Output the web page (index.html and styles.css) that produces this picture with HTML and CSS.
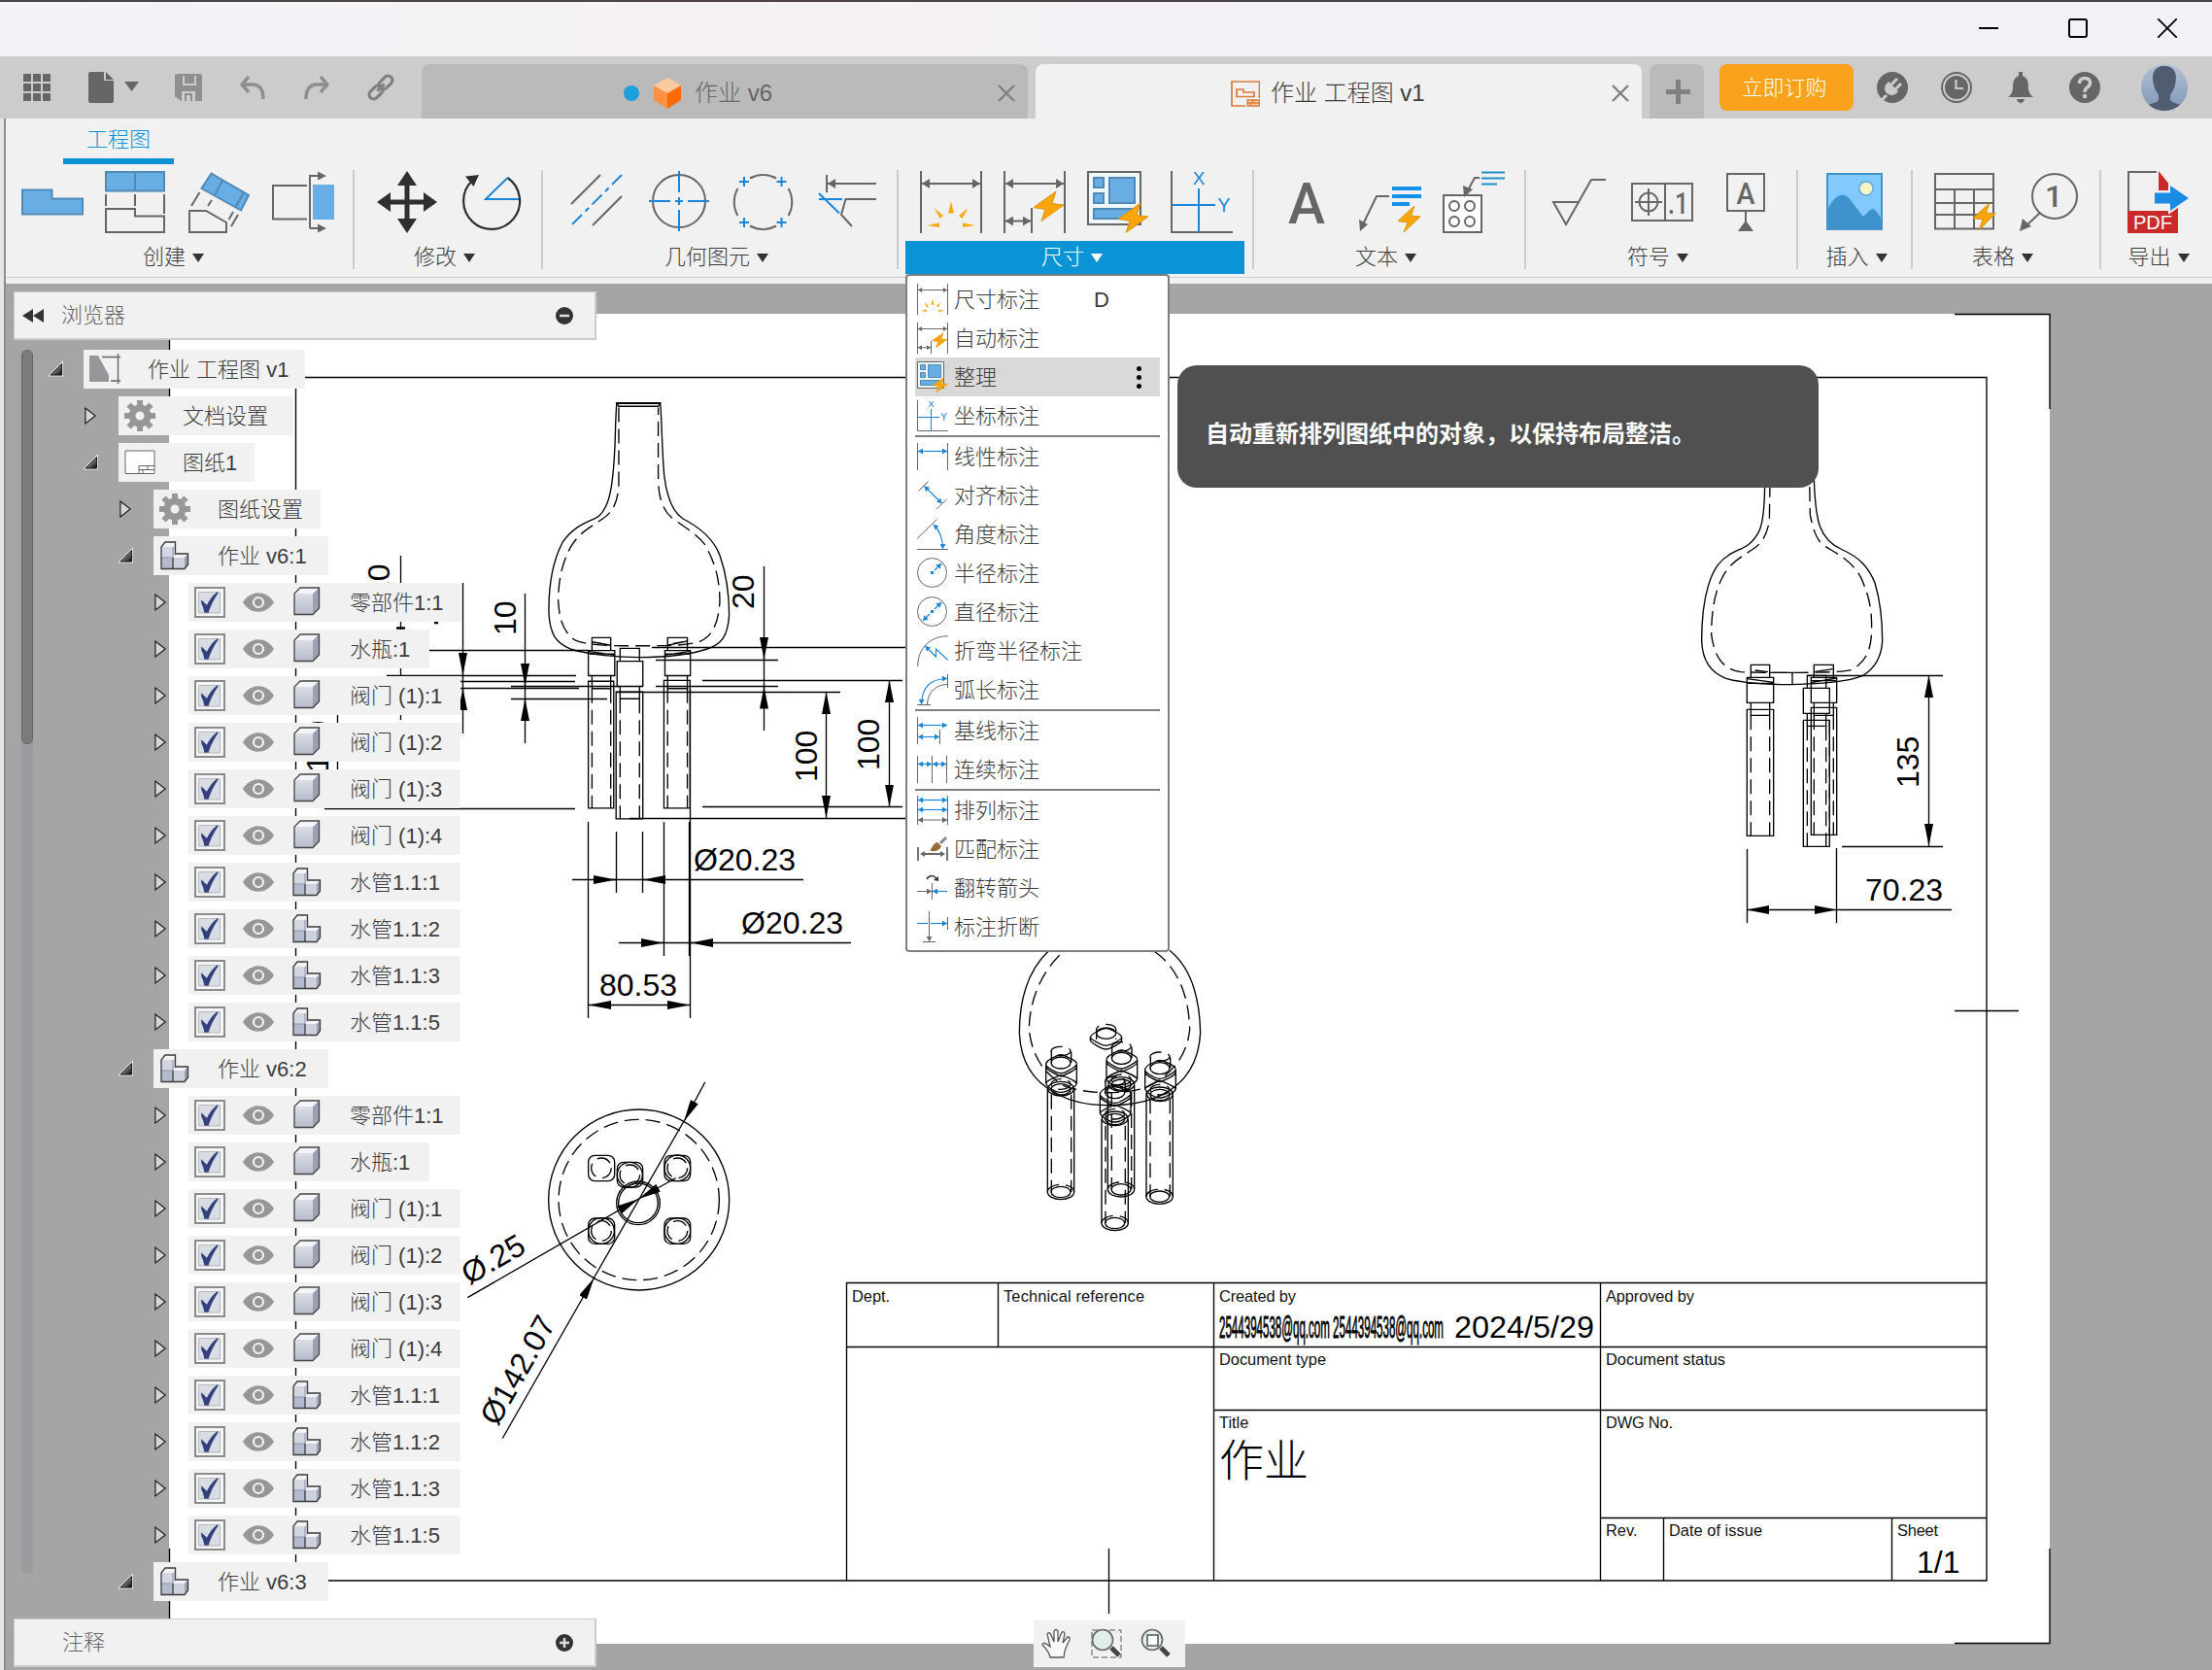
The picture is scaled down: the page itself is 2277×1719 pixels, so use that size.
FILE: index.html
```html
<!DOCTYPE html>
<html lang="zh-CN">
<head>
<meta charset="utf-8">
<title>作业 工程图 v1</title>
<link rel="stylesheet" href="styles.css">
</head>
<body>
<svg class="defs" width="0" height="0">
  <defs>
    <marker id="ag" markerUnits="userSpaceOnUse" markerWidth="8" markerHeight="10" refX="8" refY="5" orient="auto-start-reverse"><path d="M0 0L8 5L0 10z" fill="#666"/></marker>
    <marker id="ab" markerUnits="userSpaceOnUse" markerWidth="5" markerHeight="6" refX="5" refY="3" orient="auto-start-reverse"><path d="M0 0L5 3L0 6z" fill="#1a86d9"/></marker>
    <marker id="as" markerUnits="userSpaceOnUse" markerWidth="5" markerHeight="6" refX="5" refY="3" orient="auto-start-reverse"><path d="M0 0L5 3L0 6z" fill="#666"/></marker>
    <marker id="dim" markerUnits="userSpaceOnUse" markerWidth="23" markerHeight="9" refX="23" refY="4.5" orient="auto-start-reverse"><path d="M0 0L23 4.5L0 9z"/></marker>
    <linearGradient id="cubeg" x1="0" y1="0" x2="0" y2="1"><stop offset="0" stop-color="#e6e8ef"/><stop offset="1" stop-color="#b7bccb"/></linearGradient>
    <linearGradient id="expg" x1="0" y1="0" x2="1" y2="1"><stop offset="0" stop-color="#eee"/><stop offset="1" stop-color="#000"/></linearGradient>
    <linearGradient id="avg" x1="0" y1="0" x2="0" y2="1"><stop offset="0" stop-color="#b3c1d6"/><stop offset="1" stop-color="#7f96b5"/></linearGradient>
    <clipPath id="avc"><circle cx="24" cy="24" r="24"/></clipPath>
  </defs>
</svg>
<svg class="icons-lib">
  <symbol id="i-base" viewBox="0 0 64 64"><path class="blk" d="M1 19.5H31.5V28.5H63V44.5H1z"/></symbol>
  <symbol id="i-proj" viewBox="0 0 64 64"><path class="blk" d="M1 1H61V20.5H1zM31 1V20.5"/><path class="g" d="M1 24V36M31 24V36M61 24V44M1 39H31V46.5H61V63H1z"/></symbol>
  <symbol id="i-aux" viewBox="0 0 64 64"><path class="blk" d="M23.500 2.500L62 25L54 40.500L13.500 18zM35 10L27 25M57 22L48.500 37"/><path class="g" d="M11.500 22L3 36M24 30L20 36M46 42L41.500 50M51 45L44 57M1 41H18L39 53V63H1z"/></symbol>
  <symbol id="i-section" viewBox="0 0 64 64"><path class="g" d="M36 15H1V49.500H36M39 59V5H48M39 59H48"/><path d="M47 .5L56 5L47 9.500zM47 54.500L56 59L47 63.500z" fill="#666"/><path d="M42 14H64V50H42z" fill="#68ade3"/></symbol>
  <symbol id="i-move" viewBox="0 0 64 64"><path d="M32 0L42 15H34.500V29.500H49V22L63 32L49 42V34.500H34.500V49H42L32 64L22 49H29.500V34.500H15V42L1 32L15 22V29.500H29.500V15H22z" fill="#2f2f2f"/></symbol>
  <symbol id="i-rotate" viewBox="0 0 64 64"><path d="M49.500 7A29 29 0 1 1 13 10" fill="none" stroke="#2f2f2f" stroke-width="2.200"/><path d="M20 4L6 5.500L14.500 16z" fill="#2f2f2f"/><path class="b" d="M61 29H27L49.500 7"/></symbol>
  <symbol id="i-cline" viewBox="0 0 64 64"><path class="g" d="M37 4L7 34M59 26L29 56"/><path class="b" d="M59 4L5 58" stroke-dasharray="14 5 5 5"/></symbol>
  <symbol id="i-cmark" viewBox="0 0 64 64"><circle class="g" cx="32" cy="31" r="27"/><path class="b" d="M32 0V22M32 40V62M32 27V35M28 31H36M1 31H23M41 31H63"/></symbol>
  <symbol id="i-cpat" viewBox="0 0 64 64"><path class="g" d="M19 7.500A28 28 0 0 1 46 7.500M19 56.500A28 28 0 0 0 46 56.500M6.500 18A28 28 0 0 0 6.500 46M58.500 18A28 28 0 0 1 58.500 46"/><path class="b" d="M8 11H18M13 6V16M46.500 11H56.500M51.500 6V16M8 53H18M13 48V58M46.500 53H56.500M51.500 48V58"/></symbol>
  <symbol id="i-edge" viewBox="0 0 64 64"><path class="g" d="M12 4V22M63 29H31.500L27 45L38 57"/><path class="g" d="M63 13H13" marker-end="url(#ag)"/><path class="b" d="M4 23L25 43.500M4 29H28"/></symbol>
  <symbol id="i-dim" viewBox="0 0 64 64"><path class="g" d="M1 0V64M63 0V64"/><path class="g" d="M2 13H62" marker-start="url(#ag)" marker-end="url(#ag)"/><path d="M32 31L35 43.500H29zM14.500 38L24 46L20.500 49zM49.500 38L40 46L43.500 49zM7 56L20 53.500V58zM57 56L44 53.500V58z" fill="#f9a912"/></symbol>
  <symbol id="i-auto" viewBox="0 0 64 64"><path class="g" d="M1 0V64M63 0V64M29 38V64"/><path class="g" d="M2 13H62" marker-start="url(#ag)" marker-end="url(#ag)"/><path class="g" d="M2 51.500H28" marker-start="url(#ag)" marker-end="url(#ag)"/><path class="bolt" d="M54 21L31 37.500L43 39.500L39 51.500L62 35L50 33.500z"/></symbol>
  <symbol id="i-arr" viewBox="0 0 64 64"><path d="M1 1H55V55H1z" fill="#eef6fc" stroke="#666" stroke-width="2"/><path class="blk" d="M7 7H17V17H7zM23 7H49V33H23zM7 23H17V33H7zM7 39H49V49H7z"/><path class="bolt" d="M55 33L32 49.500L44 51.500L40 63.500L63 47L51 45.500z"/></symbol>
  <symbol id="i-ord" viewBox="0 0 64 64"><path class="g" d="M1 0V63H64"/><path class="b" d="M29 18V62M2 35H46"/><text class="it" x="29" y="14" text-anchor="middle" fill="#1a86d9" font-size="19">X</text><text class="it" x="55" y="41.500" text-anchor="middle" fill="#1a86d9" font-size="20">Y</text></symbol>
  <symbol id="i-text" viewBox="0 0 64 64"><text class="rb" x="13" y="54" fill="#666" font-size="59" textLength="38" lengthAdjust="spacingAndGlyphs">A</text></symbol>
  <symbol id="i-leader" viewBox="0 0 64 64"><path class="g" d="M31 26H18L4 55"/><path d="M0 50L9 55L1 62z" fill="#666"/><path d="M34 18H64M34 26H64M34 34H52" stroke="#1390e8" stroke-width="4"/><path class="bolt" d="M57 36L40 51.500L50 53L46 63L63 47L53.500 46z"/></symbol>
  <symbol id="i-hole" viewBox="0 0 64 64"><path d="M1 25H40V63H1z" fill="#fff" stroke="#666" stroke-width="2"/><g class="g"><circle cx="12" cy="36" r="5"/><circle cx="28" cy="36" r="5"/><circle cx="12" cy="52" r="5"/><circle cx="28" cy="52" r="5"/><path d="M38 7H33L26 20"/></g><path d="M21 15L31 19L22 27z" fill="#666"/><path d="M40 1.500H64M40 7.500H64M40 13.500H56" stroke="#1d8fc9" stroke-width="2"/></symbol>
  <symbol id="i-surf" viewBox="0 0 64 64"><path class="g" d="M32 32H6L19 55L45 9H60"/></symbol>
  <symbol id="i-gtol" viewBox="0 0 64 64"><path class="g" d="M1 13H63V51H1zM35 13V51M4 32H32M18 18V46"/><circle class="g" cx="18" cy="32" r="9.500"/><text class="rb" x="38" y="43.500" fill="#666" font-size="31" textLength="21" lengthAdjust="spacingAndGlyphs">.1</text></symbol>
  <symbol id="i-datum" viewBox="0 0 64 64"><path class="g" d="M13 3H51V41H13zM32 41V54"/><path d="M24 62L32 51L40 62z" fill="#666"/><text class="rb" x="32" y="34" text-anchor="middle" fill="#666" font-size="31" textLength="19" lengthAdjust="spacingAndGlyphs">A</text></symbol>
  <symbol id="i-image" viewBox="0 0 64 64"><path d="M4 3H60V60H4z" fill="#82c9fd"/><path d="M4 41C11 23 22 21 28 30L41 47L46 42Q51 36 55 42L60 50V60H4z" fill="#3f93cc"/><circle cx="44" cy="18" r="7" fill="#fdf6c8" stroke="#66afdb" stroke-width="1.500"/><path d="M4 3H60V60H4z" fill="none" stroke="#4592c6" stroke-width="2"/></symbol>
  <symbol id="i-table" viewBox="0 0 64 64"><path class="g" d="M1 3H61V59.500H1zM1 19H61M1 33H61M1 45H61M21 19V59M41 19V59"/><path class="bolt" d="M57 33L40 48.500L50 50L46 61L63 44L53.500 43z"/></symbol>
  <symbol id="i-balloon" viewBox="0 0 64 64"><circle class="g" cx="38" cy="26" r="23"/><path class="g" d="M23 43L7 58"/><path d="M5 49L14 57L2 62z" fill="#666"/><text class="rb" x="37" y="37" text-anchor="middle" fill="#666" font-size="32">1</text></symbol>
  <symbol id="i-export" viewBox="0 0 64 64"><path class="g" d="M1 41V1H30"/><path d="M32 0L48 20H32z" fill="#cb2a2a"/><path d="M0 41H44L52 37V64H0z" fill="#cb2a2a"/><path d="M28 22.500H44V15L63 28L44 41V33.500H28z" fill="#1b8ce3" stroke="#f1f1f1" stroke-width="4" paint-order="stroke"/><text class="it" x="6" y="60" fill="#fff" font-size="21" textLength="40" lengthAdjust="spacingAndGlyphs">PDF</text></symbol>

  <symbol id="m-lin" viewBox="0 0 32 32"><path class="s" d="M.5 2V30M31.500 2V30"/><path class="t" d="M1 10.500H31" marker-start="url(#ab)" marker-end="url(#ab)"/></symbol>
  <symbol id="m-ali" viewBox="0 0 32 32"><path class="s" d="M1.500 11.500L11.500 1.500M20 30L30.500 20"/><path class="t" d="M7.500 6.500L25.500 24" marker-start="url(#ab)" marker-end="url(#ab)"/></symbol>
  <symbol id="m-ang" viewBox="0 0 32 32"><path class="s" d="M0 20.500L20.500 .5M0 31.500H32"/><path class="t" d="M17 6Q26.500 15 26.500 31" marker-start="url(#ab)" marker-end="url(#ab)"/></symbol>
  <symbol id="m-rad" viewBox="0 0 32 32"><circle class="s" cx="15.500" cy="15.500" r="15"/><path d="M14 14H17V17H14z" fill="#1a86d9"/><path class="t" d="M18 13L25 6" marker-end="url(#ab)"/></symbol>
  <symbol id="m-dia" viewBox="0 0 32 32"><circle class="s" cx="15.500" cy="15.500" r="15"/><path d="M14 14H17V17H14z" fill="#1a86d9"/><path class="t" d="M18 13L25 6" marker-end="url(#ab)"/><path class="t" d="M13 18L6 25" marker-end="url(#ab)"/></symbol>
  <symbol id="m-jog" viewBox="0 0 32 32"><path class="s" d="M.7 32C1 12 14 1 32 .7"/><path class="t" d="M32 25.500L19.500 14V22L8.500 11" marker-end="url(#ab)"/></symbol>
  <symbol id="m-arc" viewBox="0 0 32 32"><path class="s" d="M0 31.500H14M31.500 0V14M10.500 31C11 18 20 10.500 31 10.500"/><path class="t" d="M4.500 31C5 14 14 4.500 31 4.500" marker-start="url(#ab)" marker-end="url(#ab)"/></symbol>
  <symbol id="m-bas" viewBox="0 0 32 32"><path class="s" d="M.5 2V30M23.500 15V30"/><path class="t" d="M1 10.500H31" marker-start="url(#ab)" marker-end="url(#ab)"/><path class="t" d="M1 22.500H23" marker-start="url(#ab)" marker-end="url(#ab)"/></symbol>
  <symbol id="m-con" viewBox="0 0 32 32"><path class="s" d="M.5 2V30M15.500 2V30M30.500 2V30"/><path class="t" d="M1 10.500H15" marker-start="url(#ab)" marker-end="url(#ab)"/><path class="t" d="M16 10.500H30" marker-start="url(#ab)" marker-end="url(#ab)"/></symbol>
  <symbol id="m-row" viewBox="0 0 32 32"><path class="t" d="M.5 1V31M31.500 1V31"/><path class="t" d="M1 5.500H31" marker-start="url(#ab)" marker-end="url(#ab)"/><path class="t" d="M1 15.500H31" marker-start="url(#ab)" marker-end="url(#ab)"/><path class="s" d="M1 26H31" marker-start="url(#as)" marker-end="url(#as)"/></symbol>
  <symbol id="m-mat" viewBox="0 0 32 32"><path d="M1 14V28M31 14V28M6 21H26" stroke="#666" stroke-width="1.800"/><path d="M3 21L8 18V24zM29 21L24 18V24z" fill="#666"/><path d="M13 17.500C16 15 16 10 21 9L25 13C23 18 18 19 13 17.500z" fill="#9a6a35"/><path d="M24 10L30 4" stroke="#888" stroke-width="3"/></symbol>
  <symbol id="m-fli" viewBox="0 0 32 32"><path class="s" d="M15.500 11V28"/><path class="s" d="M0 19.500H15" marker-end="url(#as)"/><path class="t" d="M31 19.500H16" marker-end="url(#ab)"/><path d="M10 7C13 2 18 3 20 7" fill="none" stroke="#333" stroke-width="1.500"/><path d="M17 8L22 9L22 4z" fill="#333"/></symbol>
  <symbol id="m-brk" viewBox="0 0 32 32"><path class="s" d="M31.500 6V19M6 31.500H19"/><path class="s" d="M12.500 0V31" marker-end="url(#as)"/><path class="t" d="M0 12.500H11"/><path class="t" d="M14 12.500H31" marker-end="url(#ab)"/></symbol>

  <symbol id="t-doc" viewBox="0 0 32 32"><path d="M0 2H9L20 22V29H0z" fill="#96979b"/><path d="M13 3.500H32M22 28H32M29.500 0V31" stroke="#666" stroke-width="1.400"/></symbol>
  <symbol id="t-gear" viewBox="0 0 32 32"><circle cx="16" cy="16" r="8" fill="none" stroke="#979797" stroke-width="7"/><path d="M16 0V6M16 26V32M0 16H6M26 16H32M4.500 4.500L9 9M23 23L27.500 27.500M4.500 27.500L9 23M23 9L27.500 4.500" stroke="#979797" stroke-width="6"/></symbol>
  <symbol id="t-sheet" viewBox="0 0 32 32"><path d="M1 4H31V27.500H1zM15 19.500H31M15 19.500V27.500M15 23.500H31M24 19.500V23.500M19 23.500V27.500" fill="#fff" stroke="#666"/></symbol>
  <symbol id="t-asm" viewBox="0 0 32 32"><path d="M2 7L6 2H17V28.500H2z" fill="#d3d7e2"/><path d="M2 7L6 2H17L14 7z" fill="#f2f3f7"/><path d="M2 18H14V29H2z" fill="#b5bbce"/><path d="M14 18L18 14H29.500V25L26 29.500H14z" fill="#cdd1dd"/><path d="M14 18L18 14H29.500L26 18z" fill="#f2f3f7"/><path d="M26 18L29.500 14V25L26 29.500z" fill="#9ba1b3"/><path d="M2 18H14M14 7V18" stroke="#8d93a8"/><path d="M2 29.500V7L6 2H16.500V14H29.500V25L26 29.500zM14 18V29.500" fill="none" stroke="#3a3a3a" stroke-width="1.300"/></symbol>
  <symbol id="t-cube" viewBox="0 0 32 32"><path d="M3 7L9 1H28L28 22L22 28H3z" fill="url(#cubeg)"/><path d="M22 7L28 1V22L22 28z" fill="#9ba1b3"/><path d="M3 7L9 1H28L22 7z" fill="#f4f5f8"/><path d="M3 28V7L9 1H28.500V22L22 28.500H3z" fill="none" stroke="#444" stroke-width="1.300"/></symbol>
  <symbol id="t-eye" viewBox="0 0 32 32"><path d="M0 16C8 3 24 3 32 16C24 29 8 29 0 16z" fill="#979797"/><circle cx="16" cy="16" r="5" fill="none" stroke="#f1f1f1" stroke-width="2.200"/></symbol>
  <symbol id="t-check" viewBox="0 0 32 32"><path d="M1 1H31V31H1z" fill="#f5f5f5" stroke="#8b8b8b" stroke-width="2"/><path d="M4.500 5.500H26.500V27H4.500z" fill="#d9dce2" stroke="#b5b8be"/><path d="M8 15L12 19L13 20Q18 10 24 6Q17 16 14 26L11 26Q10 20 8 17z" fill="#33417e" stroke="#33417e" stroke-width="1.500"/></symbol>
  <symbol id="t-open" viewBox="0 0 16 16"><path d="M15 1V15H1z" fill="url(#expg)" stroke="#e8e8e8" stroke-width="2"/><path d="M14.500 2V14.500H2z" fill="url(#expg)" stroke="#111"/></symbol>
  <symbol id="t-shut" viewBox="0 0 16 20"><path d="M2 1.500V18.500L13 10z" fill="#d6d6d6" stroke="#222" stroke-width="1.300"/></symbol>
</svg>

<header class="titlebar">
  <svg width="20" height="20"><path d="M0 10H20" stroke="#000" stroke-width="2"/></svg>
  <svg width="20" height="20"><rect x="1" y="1" width="18" height="18" rx="2" fill="none" stroke="#000" stroke-width="2"/></svg>
  <svg width="20" height="20"><path d="M0 0L20 20M20 0L0 20" stroke="#000" stroke-width="1.800"/></svg>
</header>

<nav class="tabbar">
  <div class="quick">
    <svg width="28" height="28"><path d="M0 0H8V8H0zM10 0H18V8H10zM20 0H28V8H20zM0 10H8V18H0zM10 10H18V18H10zM20 10H28V18H20zM0 20H8V28H0zM10 20H18V28H10zM20 20H28V28H20z" fill="#666"/></svg>
    <svg class="q-file" width="52" height="32"><path d="M2 0H16V9H26V30Q26 32 24 32H2Q0 32 0 30V2Q0 0 2 0zM18 0L26 8H18z" fill="#666"/><path d="M37 10H52L44.500 20z" fill="#666"/></svg>
    <svg class="q-save" width="28" height="28"><path d="M2 0H26Q28 0 28 2V28H6L0 23V2Q0 0 2 0zM8 2V12H22V2H20V10H10V2zM7 28H21V18H7zM10 28V20H18V28H16V22H12V28z" fill="#8f8f8f" fill-rule="evenodd"/></svg>
    <svg class="q-undo" width="27" height="24"><path d="M9 1L2 9L9 17M2 9H14Q24 10 24 24" fill="none" stroke="#8f8f8f" stroke-width="3.500"/></svg>
    <svg class="q-redo" width="27" height="24"><path d="M18 1L25 9L18 17M25 9H13Q3 10 3 24" fill="none" stroke="#8f8f8f" stroke-width="3.500"/></svg>
    <svg class="q-link" width="26" height="26"><g fill="none" stroke="#808080" stroke-width="3.200" transform="rotate(-45 13 13)"><rect x="-2" y="8.500" width="16" height="9" rx="4.500"/><rect x="12" y="8.500" width="16" height="9" rx="4.500"/><path d="M8 13H18"/></g></svg>
  </div>
  <div class="tab">
    <span class="dot"></span>
    <svg width="28" height="32"><path d="M14 0L28 8L14 16L0 8z" fill="#ffc9a0"/><path d="M0 8L14 16V32L0 23z" fill="#ff9242"/><path d="M28 8L14 16V32L28 23z" fill="#fd6a02"/></svg>
    <span>作业 v6</span>
    <svg class="x" width="18" height="18"><path d="M1 1L17 17M17 1L1 17" stroke="#808080" stroke-width="2.400"/></svg>
  </div>
  <div class="tab on">
    <svg width="30" height="27"><path d="M15 26H1V1H29.500V18M6 16.500V9H13V12H24V16.500z" fill="none" stroke="#d87a3c" stroke-width="1.700"/><path d="M17 20H29.500V26H17zM17 23H29.500M23 20V23M20 23V26" fill="#fbd0ae" stroke="#d87a3c" stroke-width="1.300"/></svg>
    <span>作业 工程图 v1</span>
    <svg class="x" width="18" height="18"><path d="M1 1L17 17M17 1L1 17" stroke="#808080" stroke-width="2.400"/></svg>
  </div>
  <div class="plus"><svg width="25" height="25"><path d="M12.500 0V25M0 12.500H25" stroke="#808080" stroke-width="5"/></svg></div>
  <button class="buy">立即订购</button>
  <div class="acct">
    <svg width="32" height="32"><circle cx="16" cy="16" r="16" fill="#666"/><path d="M21 7L15 13M25 12L19 18M5 29L10 24" stroke="#ccc" stroke-width="3"/><path d="M12 10L22 20Q17 27 10 22Q5 16 12 10z" fill="#ccc"/></svg>
    <svg width="32" height="32"><circle cx="16" cy="16" r="15" fill="none" stroke="#666" stroke-width="2"/><circle cx="16" cy="16" r="12" fill="#666"/><path d="M15.500 8V17H23" fill="none" stroke="#ccc" stroke-width="2.200"/></svg>
    <svg width="32" height="32"><path d="M14 0H18V4C24 6 24 12 24 18Q25 23 29 26H3Q7 23 8 18C8 12 8 6 14 4zM12 28H20Q19 32 16 32Q13 32 12 28z" fill="#666"/></svg>
    <svg width="32" height="32"><circle cx="16" cy="16" r="16" fill="#666"/><path d="M10.500 12Q10.500 6.500 16 6.500Q21.500 6.500 21.500 11.500Q21.500 14 18.500 16Q16 18 16 21" fill="none" stroke="#ccc" stroke-width="3.500"/><path d="M14.200 23H18V27H14.200z" fill="#ccc"/></svg>
    <svg class="avatar" width="48" height="48"><g clip-path="url(#avc)"><path d="M0 0H48V48H0z" fill="url(#avg)"/><path d="M24 2C35 2 37 10 35.500 19C34.500 26 31 30 30 32V37Q32 40 42 42V48H6V42Q16 40 18 37V32C17 30 13.500 26 12.500 19C11 10 13 2 24 2z" fill="#505c6f"/></g></svg>
  </div>
</nav>

<main class="work">
  <section class="ribbon">
    <div class="rtabs"><span>工程图</span></div>
    <div class="groups">
      <div class="grp first"><div class="icons"><svg><use href="#i-base"/></svg><svg><use href="#i-proj"/></svg><svg><use href="#i-aux"/></svg><svg><use href="#i-section"/></svg></div><div class="lbl">创建<i></i></div></div>
      <div class="grp"><div class="icons"><svg><use href="#i-move"/></svg><svg><use href="#i-rotate"/></svg></div><div class="lbl">修改<i></i></div></div>
      <div class="grp"><div class="icons"><svg><use href="#i-cline"/></svg><svg><use href="#i-cmark"/></svg><svg><use href="#i-cpat"/></svg><svg><use href="#i-edge"/></svg></div><div class="lbl">几何图元<i></i></div></div>
      <div class="grp open"><div class="icons"><svg><use href="#i-dim"/></svg><svg><use href="#i-auto"/></svg><svg><use href="#i-arr"/></svg><svg><use href="#i-ord"/></svg></div><div class="lbl">尺寸<i></i></div></div>
      <div class="grp"><div class="icons"><svg><use href="#i-text"/></svg><svg><use href="#i-leader"/></svg><svg><use href="#i-hole"/></svg></div><div class="lbl">文本<i></i></div></div>
      <div class="grp"><div class="icons"><svg><use href="#i-surf"/></svg><svg><use href="#i-gtol"/></svg><svg><use href="#i-datum"/></svg></div><div class="lbl">符号<i></i></div></div>
      <div class="grp one"><div class="icons"><svg><use href="#i-image"/></svg></div><div class="lbl">插入<i></i></div></div>
      <div class="grp"><div class="icons"><svg><use href="#i-table"/></svg><svg><use href="#i-balloon"/></svg></div><div class="lbl">表格<i></i></div></div>
      <div class="grp last"><div class="icons"><svg><use href="#i-export"/></svg></div><div class="lbl">导出<i></i></div></div>
    </div>
  </section>

  <section class="canvas">
    <svg class="sheet" width="2271" height="1427" viewBox="6 292 2271 1427">
      <path d="M174 323H2110V1692H174z" fill="#fff"/>
      <g class="ln">
        <path d="M174.500 408V323.500H272M2012 323.500H2110V421M174.500 1594V1691.500H272M2012 1691.500H2110V1594"/>
        <path d="M304.500 388.500H2045V1627H304.500zM1141.500 1594V1661M2012 1040.500H2078"/>
        <path d="M871.500 1627V1320.500H2045M1027.500 1320V1386.500M871 1386.500H2045M1249.500 1320V1627M1647.500 1320V1627M1249.500 1451.500H2045M1647.500 1562.500H2045M1712.500 1562.500V1627M1947.500 1562.500V1627"/>
      </g>
      <g class="cap">
        <text x="877" y="1340">Dept.</text>
        <text x="1033" y="1340" textLength="145">Technical reference</text>
        <text x="1255" y="1340" textLength="79">Created by</text>
        <text x="1653" y="1340" textLength="91">Approved by</text>
        <text x="1255" y="1405" textLength="110">Document type</text>
        <text x="1653" y="1405" textLength="123">Document status</text>
        <text x="1255" y="1470">Title</text>
        <text x="1653" y="1470" textLength="69">DWG No.</text>
        <text x="1653" y="1581">Rev.</text>
        <text x="1718" y="1581" textLength="96">Date of issue</text>
        <text x="1953" y="1581" textLength="42">Sheet</text>
      </g>
      <g class="dt">
        <text class="mail" x="1255" y="1377" textLength="231" lengthAdjust="spacingAndGlyphs">2544394538@qq.com 2544394538@qq.com</text>
        <text x="1497" y="1377" textLength="144" lengthAdjust="spacingAndGlyphs">2024/5/29</text>
        <text class="ttl" x="1255" y="1520" textLength="92" lengthAdjust="spacingAndGlyphs">作业</text>
        <text x="1973" y="1619">1/1</text>
      </g>

      <!-- front view -->
      <g class="ln vs" transform="translate(400 380) scale(.34439 .44005)">
        <path d="M688 87L682 79H812L806 87zM682 80H812"/>
        <path d="M682 79C676 130 680 180 670 250C664 300 650 335 620 348C590 358 550 370 520 405C490 450 478 510 479 570C482 620 500 640 545 655C600 668 690 674 750 674C800 674 890 670 950 655C995 645 1014 625 1018 575C1018 520 1010 480 990 435C970 395 930 370 880 350C850 335 832 300 824 250C816 180 818 130 812 79"/>
        <path class="da" d="M688 90V270C686 310 670 335 640 350C600 372 575 378 545 415C520 450 508 490 507 540C510 590 525 615 555 633C590 645 650 647 700 647H790C850 647 900 645 930 637C965 625 985 600 990 545C990 490 975 450 945 410C920 385 890 372 850 350C825 335 808 310 806 260V90"/>
        <path d="M608 628H664V658H608zM597 658H676V717H597zM608 717H664V747H608zM597 730H673V1027H597z"/>
        <path d="M692 653H750V683H692zM683 683H760V742H683zM692 742H750V771H692zM680 755H760V1052H680z"/>
        <path d="M834 628H893V658H834zM826 658H902V717H826zM834 717H893V747H834zM823 728H901V1027H823z"/>
        <path d="M597 660L676 669M600 666H676M608 638L664 646M626 640L650 644M826 669L902 660M826 666H900M834 646L893 636M850 642L880 638"/>
        <path class="da" d="M608 747V1027M664 747V1027M692 771V1052M750 771V1052M834 747V1027M893 747V1027"/>
      </g>
      <g class="ln">
        <path d="M442 669.500H606M398 695.500H593M474 701.500H592M474 708.500H596M526 706.500H638M526 719.500H625M671 666.500H932M675 679.500H801M675 706.500H801M723 700.500H929M634 712.500H865M648 842.500H932M723 830.500H929M334 832.500H592M412.500 572V741M347.500 702V832"/>
        <path d="M605.500 846V1048M634.500 856V919M661.500 856V919M683.500 846V984M709.500 846V984M710.500 709V1048"/>
        <path d="M476.500 600V695" marker-end="url(#dim)"/><path d="M476.500 755V708" marker-end="url(#dim)"/>
        <path d="M540.500 611V706" marker-end="url(#dim)"/><path d="M540.500 765V719" marker-end="url(#dim)"/><path d="M540.500 700V725M476.500 690V712"/>
        <path d="M786.500 583V679" marker-end="url(#dim)"/><path d="M786.500 752V706.500" marker-end="url(#dim)"/><path d="M786.500 675V710"/>
        <path d="M850.500 712V842" marker-start="url(#dim)" marker-end="url(#dim)"/>
        <path d="M915.500 700V830.500" marker-start="url(#dim)" marker-end="url(#dim)"/>
        <path d="M589 905.500H634" marker-end="url(#dim)"/><path d="M827 905.500H662" marker-end="url(#dim)"/><path d="M630 905.500H665"/>
        <path d="M637 970.500H683" marker-end="url(#dim)"/><path d="M876 970.500H711" marker-end="url(#dim)"/><path d="M680 970.500H714"/>
        <path d="M606 1034.500H710" marker-start="url(#dim)" marker-end="url(#dim)"/>
        <path d="M408 646.500H417M447 641H451" stroke-width="2.500"/>
      </g>
      <g class="dt">
        <text transform="translate(776 627) rotate(-90)">20</text>
        <text transform="translate(531 654) rotate(-90)">10</text>
        <text transform="translate(401 616) rotate(-90)">10</text>
        <text transform="translate(338 795) rotate(-90)">100</text>
        <text transform="translate(841 805) rotate(-90)">100</text>
        <text transform="translate(905 793) rotate(-90)">100</text>
        <text x="714" y="896">Ø20.23</text>
        <text x="763" y="961">Ø20.23</text>
        <text x="617" y="1025">80.53</text>
        <text transform="translate(483 1323) rotate(-30)">Ø.25</text>
        <text transform="translate(512 1469) rotate(-60.300)">Ø142.07</text>
        <text transform="translate(1975 811) rotate(-90)">135</text>
        <text x="1920" y="927">70.23</text>
      </g>

      <!-- top view -->
      <g class="ln vs" transform="translate(440 1080) scale(.33333)">
        <circle cx="653" cy="465" r="279"/><circle class="da" cx="653" cy="465" r="248"/>
        <circle cx="651" cy="475" r="67"/><circle cx="651" cy="475" r="61"/>
        <rect x="497" y="328" width="81" height="79" rx="20"/><circle class="da" cx="537" cy="367" r="31"/>
        <rect x="586" y="349" width="79" height="77" rx="20"/><circle class="da" cx="625" cy="388" r="31"/><circle cx="625" cy="388" r="39"/>
        <rect x="732" y="328" width="80" height="79" rx="20"/><circle class="da" cx="772" cy="367" r="31"/><circle cx="772" cy="367" r="40"/>
        <rect x="497" y="522" width="81" height="79" rx="20"/><circle class="da" cx="537" cy="561" r="31"/><circle cx="537" cy="561" r="40"/>
        <rect x="732" y="522" width="80" height="79" rx="20"/><circle class="da" cx="772" cy="561" r="31"/><circle cx="772" cy="561" r="40"/>
      </g>
      <g class="ln">
        <path d="M725.700 1114L704 1154.500" marker-end="url(#dim)"/><path d="M517.300 1480.500L611.500 1315.500" marker-end="url(#dim)"/><path d="M704 1154L611 1316"/>
        <path d="M481.300 1335.700L657.500 1234" marker-end="url(#dim)"/><path d="M695.700 1212.500L657.500 1234" marker-end="url(#dim)"/>
      </g>

      <!-- isometric view -->
      <g class="ln vs" transform="translate(1020 960) scale(.33333)">
        <path d="M180 55C110 120 88 220 88 310C92 400 130 460 200 495C280 545 440 545 530 500C600 465 642 400 647 310C645 200 620 110 552 55"/>
        <path class="da" d="M212 70C150 130 118 220 118 300C128 390 170 440 230 475C300 500 420 500 480 478C560 440 605 380 614 300C612 200 580 110 505 58"/>
        <g id="valve"><path d="M170 408Q168 396 200 382Q216 372 232 382Q268 396 265 408Q262 414 232 430Q216 438 200 430Q170 414 170 408V465Q172 476 200 490Q216 496 232 490Q264 476 265 465V408M170 416Q175 426 216 444Q258 428 265 416M170 465Q175 455 216 440Q258 455 265 465"/><ellipse cx="216" cy="402" rx="30" ry="18"/><ellipse class="da" cx="216" cy="366" rx="30" ry="14"/><path d="M187 368V402M248 368V402"/><ellipse cx="216" cy="482" rx="40" ry="22"/><ellipse cx="216" cy="484" rx="30" ry="17"/><ellipse class="da" cx="216" cy="468" rx="30" ry="16"/></g>
        <use href="#valve" x="306" y="17"/><use href="#valve" x="187" y="-14"/><use href="#valve" x="167" y="92"/>
        <g id="plate"><path d="M307 323Q308 314 340 300Q355 292 371 300Q404 314 404 323Q404 330 371 345Q355 352 340 345Q308 330 307 323V332Q310 340 340 356Q355 364 371 356Q402 342 404 332V323"/><ellipse cx="356" cy="311" rx="30" ry="17"/><path class="da" d="M326 330V298Q330 284 356 283Q384 284 386 298V330"/></g>
        <g id="pipe"><path d="M175 480V801A41 23 0 0 0 257 801V480"/><path d="M175 801A41 23 0 0 1 257 801" class="da"/><ellipse cx="216" cy="801" rx="30" ry="17"/><path class="da" d="M187 500V801M248 500V801"/></g>
        <use href="#pipe" x="305" y="14"/><use href="#pipe" x="186" y="-8"/><use href="#pipe" x="167" y="96"/>
      </g>

      <!-- side view -->
      <g class="ln vs" transform="translate(1700 480) scale(.33333)">
        <path d="M350 40C350 130 345 180 330 205C310 240 290 250 260 262C210 285 190 320 175 370C160 420 155 470 155 540C158 610 190 640 230 655C290 672 360 674 434 674C540 672 610 664 650 648C690 625 710 590 713 540C713 470 708 420 690 360C670 310 640 280 590 258C560 245 535 225 520 185C508 150 504 100 502 40"/>
        <path class="da" d="M366 50L364 170C355 215 340 240 310 258C270 285 240 300 218 345C195 390 185 450 185 520C195 590 220 625 275 635C350 638 400 637 450 637C500 637 590 636 620 628C660 605 680 570 680 500C680 430 670 400 650 350C620 290 580 275 530 243C510 225 500 200 490 150L488 40"/>
        <path d="M307 613H365V652H307zM295 652H377V730H295zM307 730H365V769H307zM295 751H377V1141H295z"/>
        <path d="M502 613H562V652H502zM493 652H572V730H493zM502 730H562V769H502zM493 745H572V1138H493z"/>
        <path d="M481 646H539V685H481zM469 685H550V763H469zM481 763H539V802H481zM469 784H550V1174H469z"/>
        <path d="M295 656L377 667M297 670H377M320 630L360 635M435 637V674M365 637H440M493 668L572 654M495 662H570M505 634L560 626"/>
        <path class="da" d="M307 769V1141M365 769V1141M502 769V1138M562 769V1138M481 802V1174M539 802V1174M550 784V1138"/>
      </g>
      <g class="ln">
        <path d="M1860 695.500H2000M1896 871.500H2000M1798.500 874V950M1890.500 873V950M1890 936.500H2009"/>
        <path d="M1985.500 695V871" marker-start="url(#dim)" marker-end="url(#dim)"/>
        <path d="M1798 936.500H1890.500" marker-start="url(#dim)" marker-end="url(#dim)"/>
      </g>
    </svg>

    <aside class="browser">
      <div class="phead"><svg width="22" height="14"><path d="M11 0V14L0 7zM22 0V14L11 7z" fill="#333"/></svg><span>浏览器</span><svg class="tog" width="18" height="18"><circle cx="9" cy="9" r="9" fill="#333"/><path d="M4 9H14" stroke="#ddd" stroke-width="2.500"/></svg></div>
      <div class="pbody">
        <div class="track"><div class="thumb"></div></div>
        <ul class="tree">
          <li class="r0"><svg class="ex"><use href="#t-open"/></svg><div class="card w228"><svg><use href="#t-doc"/></svg><span>作业 工程图 v1</span></div></li>
          <li class="r1"><svg class="ex"><use href="#t-shut"/></svg><div class="card w180"><svg><use href="#t-gear"/></svg><span>文档设置</span></div></li>
          <li class="r1"><svg class="ex"><use href="#t-open"/></svg><div class="card w140"><svg><use href="#t-sheet"/></svg><span>图纸1</span></div></li>
          <li class="r2"><svg class="ex"><use href="#t-shut"/></svg><div class="card w172"><svg><use href="#t-gear"/></svg><span>图纸设置</span></div></li>
          <li class="r2"><svg class="ex"><use href="#t-open"/></svg><div class="card w180"><svg><use href="#t-asm"/></svg><span>作业 v6:1</span></div></li>
          <li class="r3"><svg class="ex"><use href="#t-shut"/></svg><div class="card"><svg><use href="#t-check"/></svg><svg><use href="#t-eye"/></svg><svg><use href="#t-cube"/></svg><span>零部件1:1</span></div></li>
          <li class="r3"><svg class="ex"><use href="#t-shut"/></svg><div class="card w248"><svg><use href="#t-check"/></svg><svg><use href="#t-eye"/></svg><svg><use href="#t-cube"/></svg><span>水瓶:1</span></div></li>
          <li class="r3"><svg class="ex"><use href="#t-shut"/></svg><div class="card"><svg><use href="#t-check"/></svg><svg><use href="#t-eye"/></svg><svg><use href="#t-cube"/></svg><span>阀门 (1):1</span></div></li>
          <li class="r3"><svg class="ex"><use href="#t-shut"/></svg><div class="card"><svg><use href="#t-check"/></svg><svg><use href="#t-eye"/></svg><svg><use href="#t-cube"/></svg><span>阀门 (1):2</span></div></li>
          <li class="r3"><svg class="ex"><use href="#t-shut"/></svg><div class="card"><svg><use href="#t-check"/></svg><svg><use href="#t-eye"/></svg><svg><use href="#t-cube"/></svg><span>阀门 (1):3</span></div></li>
          <li class="r3"><svg class="ex"><use href="#t-shut"/></svg><div class="card"><svg><use href="#t-check"/></svg><svg><use href="#t-eye"/></svg><svg><use href="#t-cube"/></svg><span>阀门 (1):4</span></div></li>
          <li class="r3"><svg class="ex"><use href="#t-shut"/></svg><div class="card"><svg><use href="#t-check"/></svg><svg><use href="#t-eye"/></svg><svg><use href="#t-asm"/></svg><span>水管1.1:1</span></div></li>
          <li class="r3"><svg class="ex"><use href="#t-shut"/></svg><div class="card"><svg><use href="#t-check"/></svg><svg><use href="#t-eye"/></svg><svg><use href="#t-asm"/></svg><span>水管1.1:2</span></div></li>
          <li class="r3"><svg class="ex"><use href="#t-shut"/></svg><div class="card"><svg><use href="#t-check"/></svg><svg><use href="#t-eye"/></svg><svg><use href="#t-asm"/></svg><span>水管1.1:3</span></div></li>
          <li class="r3"><svg class="ex"><use href="#t-shut"/></svg><div class="card"><svg><use href="#t-check"/></svg><svg><use href="#t-eye"/></svg><svg><use href="#t-asm"/></svg><span>水管1.1:5</span></div></li>
          <li class="r2"><svg class="ex"><use href="#t-open"/></svg><div class="card w180"><svg><use href="#t-asm"/></svg><span>作业 v6:2</span></div></li>
          <li class="r3"><svg class="ex"><use href="#t-shut"/></svg><div class="card"><svg><use href="#t-check"/></svg><svg><use href="#t-eye"/></svg><svg><use href="#t-cube"/></svg><span>零部件1:1</span></div></li>
          <li class="r3"><svg class="ex"><use href="#t-shut"/></svg><div class="card w248"><svg><use href="#t-check"/></svg><svg><use href="#t-eye"/></svg><svg><use href="#t-cube"/></svg><span>水瓶:1</span></div></li>
          <li class="r3"><svg class="ex"><use href="#t-shut"/></svg><div class="card"><svg><use href="#t-check"/></svg><svg><use href="#t-eye"/></svg><svg><use href="#t-cube"/></svg><span>阀门 (1):1</span></div></li>
          <li class="r3"><svg class="ex"><use href="#t-shut"/></svg><div class="card"><svg><use href="#t-check"/></svg><svg><use href="#t-eye"/></svg><svg><use href="#t-cube"/></svg><span>阀门 (1):2</span></div></li>
          <li class="r3"><svg class="ex"><use href="#t-shut"/></svg><div class="card"><svg><use href="#t-check"/></svg><svg><use href="#t-eye"/></svg><svg><use href="#t-cube"/></svg><span>阀门 (1):3</span></div></li>
          <li class="r3"><svg class="ex"><use href="#t-shut"/></svg><div class="card"><svg><use href="#t-check"/></svg><svg><use href="#t-eye"/></svg><svg><use href="#t-cube"/></svg><span>阀门 (1):4</span></div></li>
          <li class="r3"><svg class="ex"><use href="#t-shut"/></svg><div class="card"><svg><use href="#t-check"/></svg><svg><use href="#t-eye"/></svg><svg><use href="#t-asm"/></svg><span>水管1.1:1</span></div></li>
          <li class="r3"><svg class="ex"><use href="#t-shut"/></svg><div class="card"><svg><use href="#t-check"/></svg><svg><use href="#t-eye"/></svg><svg><use href="#t-asm"/></svg><span>水管1.1:2</span></div></li>
          <li class="r3"><svg class="ex"><use href="#t-shut"/></svg><div class="card"><svg><use href="#t-check"/></svg><svg><use href="#t-eye"/></svg><svg><use href="#t-asm"/></svg><span>水管1.1:3</span></div></li>
          <li class="r3"><svg class="ex"><use href="#t-shut"/></svg><div class="card"><svg><use href="#t-check"/></svg><svg><use href="#t-eye"/></svg><svg><use href="#t-asm"/></svg><span>水管1.1:5</span></div></li>
          <li class="r2"><svg class="ex"><use href="#t-open"/></svg><div class="card w180"><svg><use href="#t-asm"/></svg><span>作业 v6:3</span></div></li>
        </ul>
      </div>
      <div class="phead notes"><span>注释</span><svg class="tog" width="18" height="18"><circle cx="9" cy="9" r="9" fill="#333"/><path d="M4 9H14M9 4V14" stroke="#ddd" stroke-width="2.500"/></svg></div>
    </aside>

    <div class="menu">
      <div class="mi"><svg><use href="#i-dim"/></svg><span>尺寸标注</span><kbd>D</kbd></div>
      <div class="mi"><svg><use href="#i-auto"/></svg><span>自动标注</span></div>
      <div class="mi hot"><svg><use href="#i-arr"/></svg><span>整理</span><div class="more"><b></b><b></b><b></b></div></div>
      <div class="mi"><svg><use href="#i-ord"/></svg><span>坐标标注</span></div>
      <hr>
      <div class="mi"><svg><use href="#m-lin"/></svg><span>线性标注</span></div>
      <div class="mi"><svg><use href="#m-ali"/></svg><span>对齐标注</span></div>
      <div class="mi"><svg><use href="#m-ang"/></svg><span>角度标注</span></div>
      <div class="mi"><svg><use href="#m-rad"/></svg><span>半径标注</span></div>
      <div class="mi"><svg><use href="#m-dia"/></svg><span>直径标注</span></div>
      <div class="mi"><svg><use href="#m-jog"/></svg><span>折弯半径标注</span></div>
      <div class="mi"><svg><use href="#m-arc"/></svg><span>弧长标注</span></div>
      <hr>
      <div class="mi"><svg><use href="#m-bas"/></svg><span>基线标注</span></div>
      <div class="mi"><svg><use href="#m-con"/></svg><span>连续标注</span></div>
      <hr>
      <div class="mi"><svg><use href="#m-row"/></svg><span>排列标注</span></div>
      <div class="mi"><svg><use href="#m-mat"/></svg><span>匹配标注</span></div>
      <div class="mi"><svg><use href="#m-fli"/></svg><span>翻转箭头</span></div>
      <div class="mi"><svg><use href="#m-brk"/></svg><span>标注折断</span></div>
    </div>

    <div class="tip">自动重新排列图纸中的对象，以保持布局整洁。</div>

    <div class="navbar">
      <svg width="32" height="32"><path d="M9 30Q8 24 1 17Q2 13 9 19L6 6Q8 3 10 7L13 14L13 3Q15 0 17 3V14L21 4Q24 3 24 6L22 15L27 9Q30 9 29 12Q25 20 24 24L23 30z" fill="#f7f9fb" stroke="#555" stroke-width="1.300"/></svg>
      <svg width="32" height="32"><path d="M1 2H31V30H1z" fill="none" stroke="#555" stroke-dasharray="6 3"/><path d="M21 20L29 28" stroke="#444" stroke-width="5"/><circle cx="12" cy="12" r="10.500" fill="#e0eeee" stroke="#666" stroke-width="1.600"/></svg>
      <svg width="32" height="32"><path d="M21 20L29 28" stroke="#444" stroke-width="5"/><circle cx="12" cy="12" r="10.500" fill="#e0eeee" stroke="#666" stroke-width="1.600"/><path d="M7 7H18V18H7z" fill="#fff" stroke="#555" stroke-width="1.500"/></svg>
    </div>
  </section>
</main>
</body>
</html>
```
FILE: styles.css
```css
* { box-sizing: border-box; }
body {
  margin: 0;
  width: 2277px;
  height: 1719px;
  overflow: hidden;
  display: flex;
  flex-direction: column;
  background: #e6e6e6;
  color: #3c3c3c;
  font: 300 22px/1 "Liberation Sans", "Noto Sans CJK SC", sans-serif;
}
svg { display: block; flex: none; }
svg.defs { position: absolute; }
svg.icons-lib { display: none; }

/* shared icon strokes */
.g { fill: none; stroke: #666; stroke-width: 2; }
.b { fill: none; stroke: #1a86d9; stroke-width: 2; }
.s { fill: none; stroke: #666; stroke-width: 1; }
.t { fill: none; stroke: #1a86d9; stroke-width: 1.2; }
.blk { fill: #68ade3; stroke: #4f8ab7; stroke-width: 2; }
.bolt { fill: #faa50a; stroke: #dd930f; stroke-width: 1; }
.it { font-family: "Liberation Sans", Arial, sans-serif; font-weight: 400; }
.rb { font-family: Roboto, sans-serif; font-weight: 500; }

.titlebar {
  height: 58px;
  flex: none;
  display: flex;
  justify-content: flex-end;
  align-items: center;
  gap: 72px;
  padding: 0 36px 2px 0;
  border-top: 2px solid #4b4245;
  background: linear-gradient(90deg, #f2f3f8, #f6f1f3 35%, #f2f1f8 60%);
}

.tabbar {
  height: 64px;
  flex: none;
  display: flex;
  align-items: flex-end;
  background: #ccc;
}
.quick { width: 434px; height: 64px; display: flex; align-items: center; padding-left: 24px; }
.q-file { margin-left: 39px; }
.q-save { margin-left: 37px; }
.q-undo { margin-left: 39px; }
.q-redo { margin-left: 38px; }
.q-link { margin-left: 40px; overflow: visible; }
.tab {
  width: 624px;
  height: 56px;
  margin-right: 8px;
  display: flex;
  align-items: center;
  padding: 4px 13px 0 208px;
  gap: 14px;
  border-radius: 8px 8px 0 0;
  background: #bababa;
  color: #666;
  font-size: 24px;
}
.tab.on { background: #f1f1f1; color: #3c3c3c; padding-left: 201px; gap: 11px; }
.dot { width: 16px; height: 16px; border-radius: 50%; background: #1b9fdd; margin-right: 1px; }
.tab .x { margin-left: auto; }
.plus {
  width: 56px;
  height: 56px;
  display: flex;
  align-items: center;
  justify-content: center;
  padding-left: 3px;
  border-radius: 8px 8px 0 0;
  background: #bababa;
}
.buy {
  width: 138px;
  height: 48px;
  margin: 0 0 8px 16px;
  padding: 1px 5px 0 0;
  border: 0;
  border-radius: 8px;
  background: #faa21b;
  color: #fff;
  font: inherit;
}
.acct { display: flex; align-items: center; height: 48px; margin: 0 0 8px 24px; gap: 34px; }
.avatar { margin-left: 8px; }

.work { flex: 1; margin-left: 4px; border-left: 2px solid #8e8e8e; display: flex; flex-direction: column; }
.ribbon { height: 170px; flex: none; background: #f1f1f1; display: flex; flex-direction: column; }
.rtabs { height: 47px; padding-left: 59px; flex: none; }
.rtabs span {
  display: block;
  width: 114px;
  height: 47px;
  padding-top: 11px;
  text-align: center;
  color: #0a93d4;
  border-bottom: 6px solid #0a93d4;
}
.groups { display: flex; height: 117px; border-bottom: 1px solid #ccc; flex: none; padding-top: 6px; }
.grp { display: flex; flex-direction: column; flex: none; padding: 0 20px 0 22px; border-right: 2px solid #ccc; height: 102px; }
.grp.first { padding: 0 19px 0 16px; }
.grp.one { padding: 0 26px; width: 118px; }
.grp.last { padding: 0 0 0 27px; width: 114px; border: 0; }
.icons { display: flex; gap: 22px; margin-top: 1px; flex: none; }
.icons svg { width: 64px; height: 64px; overflow: visible; }
.lbl { display: flex; align-items: center; justify-content: center; gap: 7px; height: 34px; flex: none; margin: 8px 9px 0 0; white-space: nowrap; }
.one .lbl { margin: 8px -10px 0 -6px; }
.last .lbl { margin: 8px 13px 0 -10px; }
.lbl i { border: 6px solid transparent; border-top: 9px solid #333; border-bottom: 0; }
.open .lbl { margin: 8px -12px 0 -15px; padding-right: 6px; background: #0a94d6; color: #fff; }
.open .lbl i { border-top-color: #fff; }

.canvas { flex: 1; position: relative; background: #a5a5a5; }
.sheet { position: absolute; left: 0; top: 0; }
.ln { fill: none; stroke: #000; stroke-width: 1.35; }
.vs * { vector-effect: non-scaling-stroke; }
.da { stroke-dasharray: 15 7; }
.cap { font: 16.4px "Liberation Sans", Arial, sans-serif; fill: #111; }
.dt { font: 32px "Liberation Sans", Arial, sans-serif; fill: #000; }
.ttl { font: 300 45px "Noto Sans CJK SC", sans-serif; }
.mail { stroke: #000; stroke-width: .9; }

.browser { position: absolute; left: 8px; top: 8px; width: 600px; height: 1416px; display: flex; flex-direction: column; }
.phead {
  height: 50px;
  flex: none;
  display: flex;
  align-items: center;
  padding: 0 22px 0 8px;
  gap: 18px;
  background: #f1f1f1;
  border: 2px solid #ccc;
  border-width: 1px 2px 2px 1px;
  color: #666;
}
.phead.notes { padding-left: 49px; margin-top: auto; }
.tog { margin-left: auto; }
.pbody { display: flex; padding: 10px 0 0 8px; }
.track { width: 12px; height: 1260px; background: #9b9c9f; border-radius: 6px; }
.thumb { height: 406px; border-radius: 6px; background: #7b7b7d; border: 1px solid #636363; }
.tree { list-style: none; margin: 0; padding: 0; display: flex; flex-direction: column; gap: 8px; }
.tree li { display: flex; align-items: center; height: 40px; }
.ex { width: 15px; height: 20px; margin: 0 21px 0 -2px; }
.r0 { padding-left: 18px; }
.r1 { padding-left: 54px; }
.r2 { padding-left: 90px; }
.r3 { padding-left: 126px; }
.card { height: 40px; width: 280px; padding-left: 6px; display: flex; align-items: center; gap: 18px; background: #f1f1f1; white-space: nowrap; }
.card svg { width: 32px; height: 32px; }
.card span { margin-left: 10px; padding-top: 1px; }
.w228 { width: 228px; }
.w180 { width: 180px; }
.w172 { width: 172px; }
.w140 { width: 140px; }
.w248 { width: 248px; }

.menu {
  position: absolute;
  left: 926px;
  top: -10px;
  width: 272px;
  padding: 4px 8px;
  border: 2px solid #7f7f7f;
  border-radius: 4px;
  background: #fff;
}
.mi { height: 40px; display: flex; align-items: center; padding: 0 19px 0 2px; }
.mi svg { width: 32px; height: 32px; margin-right: 6px; }
.mi span, .mi kbd { padding-top: 1px; }
.mi kbd { font: inherit; margin-left: 56px; }
.hot { background: #d9d9d9; }
.more { margin-left: auto; display: flex; flex-direction: column; gap: 4px; }
.more b { width: 5px; height: 5px; border-radius: 50%; background: #000; }
.menu hr { height: 2px; margin: 0; border: 0; background: #7f7f7f; }

.tip {
  position: absolute;
  left: 1206px;
  top: 84px;
  width: 660px;
  height: 126px;
  padding: 15px 0 0 29px;
  display: flex;
  align-items: center;
  border-radius: 20px;
  background: #505050;
  color: #fff;
  font-size: 24px;
  font-weight: 700;
  white-space: nowrap;
}
.navbar {
  position: absolute;
  left: 1058px;
  top: 1376px;
  width: 156px;
  height: 48px;
  display: flex;
  align-items: center;
  justify-content: center;
  padding-right: 7px;
  gap: 19px;
  background: #f1f1f1;
}
```
